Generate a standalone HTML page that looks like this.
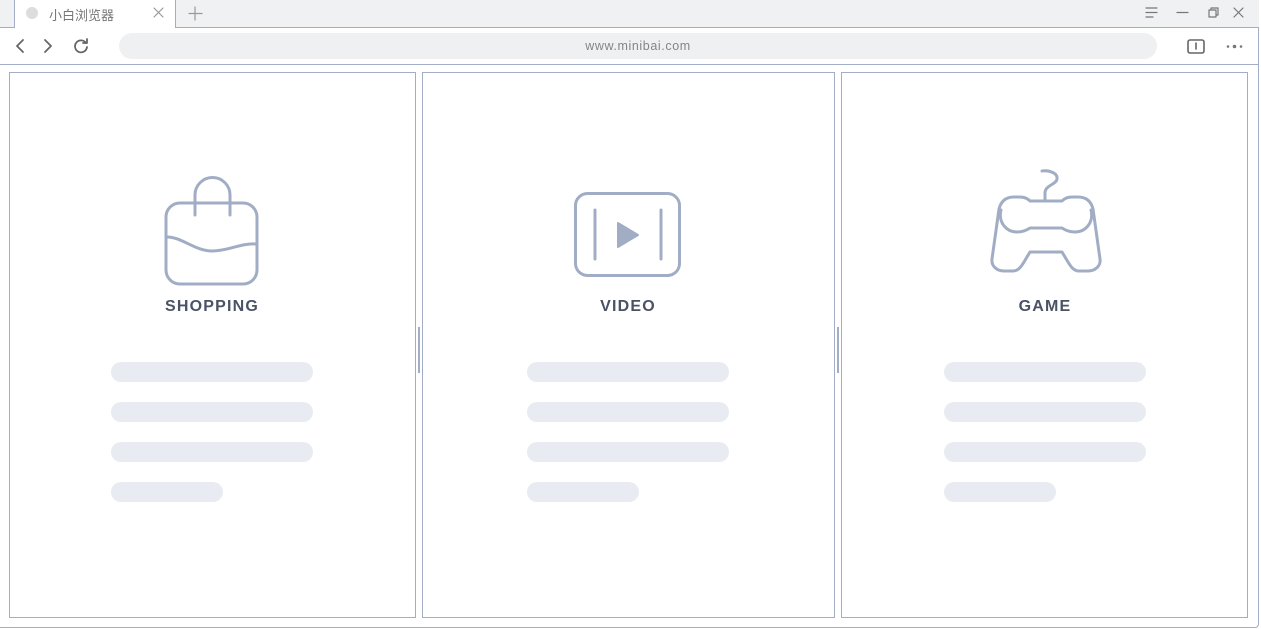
<!DOCTYPE html>
<html><head><meta charset="utf-8"><style>
*{margin:0;padding:0;box-sizing:border-box}
body{width:1261px;height:629px;background:#fff;position:relative;overflow:hidden;font-family:"Liberation Sans","Noto Sans CJK SC",sans-serif}
.abs{position:absolute}
.tabbar{left:0;top:0;width:1259px;height:28px;background:#f0f1f3;border-bottom:1px solid #a3aec6}
.tab{left:14px;top:0;width:162px;height:28px;background:#fff;border:1px solid #a3aec6;border-top:none;border-bottom:none}
.frame{left:0;top:27px;width:1259px;height:601px;border-right:1px solid #a3aec6;border-bottom:1px solid #a3aec6;border-radius:0 0 4px 0}
.addr{left:119px;top:33px;width:1038px;height:26px;background:#eff0f2;border-radius:13px;text-align:center;font-size:12.5px;line-height:26px;color:#858585;letter-spacing:.6px}
.sep{left:0;top:64px;width:1259px;height:1px;background:#a3aec6}
.panel{border:1px solid #a3aec6;top:72px;height:546px}
.bar{height:20px;border-radius:10px;background:#e8ebf1}
.lbl{font-weight:bold;font-size:16px;color:#4a5266;letter-spacing:1.2px;text-align:center;width:200px;top:298px}
.handle{width:2px;height:46px;top:327px;background:#a3aec6}
</style></head><body>
<div class="abs tabbar"></div>
<div class="abs tab"></div>
<div class="abs" style="left:26px;top:7px;width:12px;height:12px;border-radius:6px;background:#ddd"></div>
<div class="abs" style="left:49px;top:5px;font-size:13px;color:#777">小白浏览器</div>
<div class="abs frame"></div>
<div class="abs addr">www.minibai.com</div>
<div class="abs sep"></div>
<svg class="abs" style="left:0;top:0" width="1261" height="629" fill="none" stroke-linecap="round" stroke-linejoin="round">
<g stroke="#999" stroke-width="1.2"><path d="M154 8l9 9M163 8l-9 9"/><path d="M195 7v13M189 13.5h13"/></g>
<g stroke="#777" stroke-width="1.2"><path d="M1146 8h11M1146 12.5h11M1146 17h7"/><path d="M1177 12.5h11"/><path d="M1209 10h7v7h-7z M1211 10v-2h7v7h-2"/><path d="M1234 8l9 9M1243 8l-9 9"/></g>
<g stroke="#666" stroke-width="1.8"><path d="M23 40l-6 6 6 6"/><path d="M45 40l6 6-6 6"/><path d="M86 43a6 6 0 1 0 1 4"/></g>
<path d="M87 39v4h-4" stroke="#666" stroke-width="1.8"/>
<rect x="1188" y="40" width="16" height="13" rx="2" stroke="#666" stroke-width="1.6"/><path d="M1196 43v6" stroke="#666" stroke-width="1.6"/>
<g fill="#777"><circle cx="1228" cy="46.5" r="1.3"/><circle cx="1234.5" cy="46.5" r="1.8"/><circle cx="1241" cy="46.5" r="1.3"/></g>
<g stroke="#a1adc4" stroke-width="3">
<rect x="166" y="203" width="91" height="81" rx="14"/>
<path d="M195 215v-20a17.5 17.5 0 0 1 35 0v20"/>
<path d="M167 237c15 0 28 14 45 14s28-8 44-7"/>
<rect x="575.5" y="193.5" width="104" height="82" rx="12"/>
<path d="M595 210v49M661 210v49"/>
<path d="M1042 171c7-1 16 2 15 8s-12 6-12 14v8"/>
<path d="M1030 201h32c4-4 8-4 12-4h4c8 0 13 4 15 12l7 50c1 7-5 12-12 12h-9c-5 0-8-4-11-9l-6-10h-32l-6 10c-3 5-6 9-11 9h-9c-7 0-13-5-12-12l7-50c2-8 7-12 15-12h4c4 0 8 0 12 4z"/>
<path d="M1001 210c-3 12 5 22 16 22c6 0 10-2 13-4h32c3 2 7 4 13 4c11 0 19-10 16-22"/>
</g>
<path d="M618 223l20 12-20 12z" fill="#a1adc4" stroke="#a1adc4" stroke-width="2"/>
</svg>
<div class="abs panel" style="left:9px;width:407px"></div>
<div class="abs panel" style="left:422px;width:413px"></div>
<div class="abs panel" style="left:841px;width:407px"></div>
<div class="abs handle" style="left:418px"></div>
<div class="abs handle" style="left:837px"></div>
<div class="abs lbl" style="left:112px">SHOPPING</div>
<div class="abs lbl" style="left:528px">VIDEO</div>
<div class="abs lbl" style="left:945px">GAME</div>
<div class="abs bar" style="left:111px;top:362px;width:202px"></div>
<div class="abs bar" style="left:111px;top:402px;width:202px"></div>
<div class="abs bar" style="left:111px;top:442px;width:202px"></div>
<div class="abs bar" style="left:111px;top:482px;width:112px"></div>
<div class="abs bar" style="left:527px;top:362px;width:202px"></div>
<div class="abs bar" style="left:527px;top:402px;width:202px"></div>
<div class="abs bar" style="left:527px;top:442px;width:202px"></div>
<div class="abs bar" style="left:527px;top:482px;width:112px"></div>
<div class="abs bar" style="left:944px;top:362px;width:202px"></div>
<div class="abs bar" style="left:944px;top:402px;width:202px"></div>
<div class="abs bar" style="left:944px;top:442px;width:202px"></div>
<div class="abs bar" style="left:944px;top:482px;width:112px"></div>
</body></html>
